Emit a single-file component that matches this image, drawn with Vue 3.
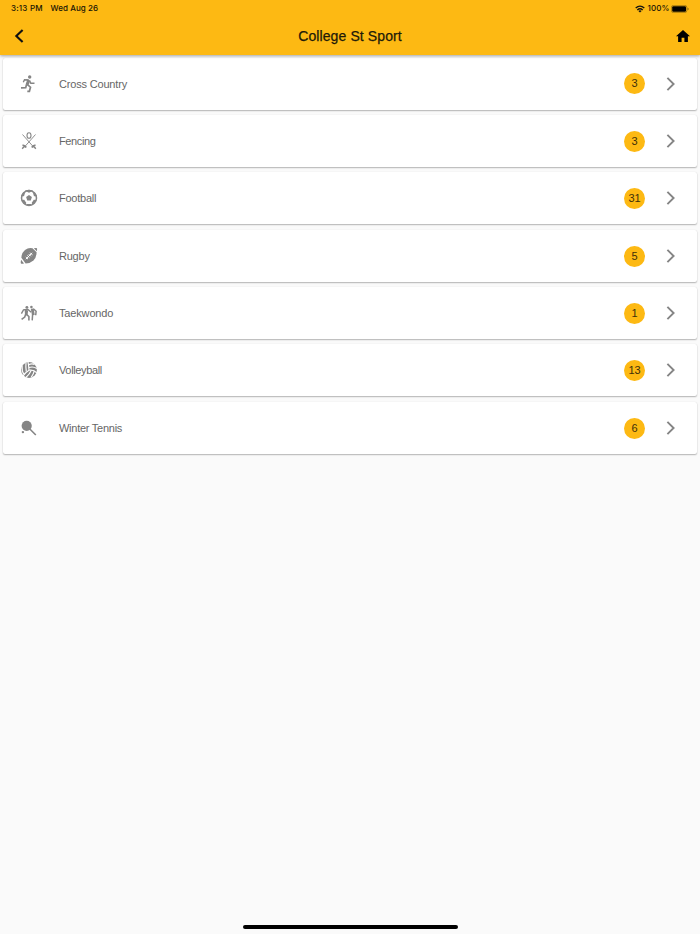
<script setup>
const sports = [
  { name: 'Cross Country', count: 3, icon: 'run', spacing: -0.18 },
  { name: 'Fencing', count: 3, icon: 'fencing', spacing: -0.36 },
  { name: 'Football', count: 31, icon: 'football', spacing: -0.25 },
  { name: 'Rugby', count: 5, icon: 'rugby', spacing: -0.22 },
  { name: 'Taekwondo', count: 1, icon: 'taekwondo', spacing: -0.16 },
  { name: 'Volleyball', count: 13, icon: 'volleyball', spacing: -0.36 },
  { name: 'Winter Tennis', count: 6, icon: 'tennis', spacing: -0.26 },
]
</script>

<template>
  <main class="screen">
    <header class="header">
      <div class="status">
        <span class="time">3:13 PM</span>
        <span class="date">Wed Aug 26</span>
        <svg class="wifi" viewBox="0 0 10 8">
          <g fill="none" stroke="#111" stroke-width="1.35">
            <path d="M.7 3.1Q5-.8 9.3 3.1" />
            <path d="M2.3 4.9Q5 2.5 7.7 4.9" />
          </g>
          <path d="M3.4 5.9Q5 4.7 6.6 5.9L5 7.6z" fill="#111" />
        </svg>
        <span class="percent">100%</span>
        <svg class="battery" viewBox="0 0 18 8">
          <rect x=".4" y=".4" width="15.4" height="7.2" rx="2" fill="none" stroke="#111" stroke-opacity=".45" stroke-width=".7" />
          <rect x="1.2" y="1.2" width="13.8" height="5.6" rx="1.2" fill="#000" />
          <path d="M16.6 2.8q1 .3 1 1.2t-1 1.2z" fill="#111" fill-opacity=".55" />
        </svg>
      </div>
      <div class="bar">
        <svg class="back" viewBox="0 0 10 14"><path d="M8.6.9 2.3 7l6.3 6.1" fill="none" stroke="#111" stroke-width="2.1" /></svg>
        <h1>College St Sport</h1>
        <svg class="home" viewBox="2 3 20 17"><path d="M10 20v-6h4v6h5v-8h3L12 3 2 12h3v8z" /></svg>
      </div>
    </header>

    <section class="list">
      <article v-for="sport in sports" :key="sport.name" class="card">
        <svg class="icon" viewBox="0 0 30 30">
          <g v-if="sport.icon === 'run'">
            <circle cx="15.7" cy="8" r="1.7" />
            <path d="M11.6 10.2 14.6 10.4 16.1 11.8 14.9 15.5 13 16.5 11.8 14.8 13 11.4z" />
            <path d="M9.3 13.2 10.5 10.7 14.5 11M15.6 11.6 16.8 14.2 20.5 14.3" fill="none" stroke="#858585" stroke-width="1.4" />
            <path d="M12.6 15.2 11.7 18.6 7 18.8" fill="none" stroke="#858585" stroke-width="1.7" />
            <path d="M13.1 15.4 16.5 18.2 15.4 22.3H13.3" fill="none" stroke="#858585" stroke-width="1.7" />
          </g>
          <g v-else-if="sport.icon === 'fencing'" fill="none" stroke="#858585">
            <ellipse cx="15" cy="9.5" rx="2" ry="2.8" stroke-width="1.1" />
            <path d="M8.5 8.5 20 21.5M21.5 8.5 10 21.5" stroke-width=".9" />
            <path d="M8.5 19.7Q10.3 18.7 12.2 21.5M21.5 19.7Q19.7 18.7 17.8 21.5" stroke-width="1.9" />
            <path d="m9.9 20.8-1.7 2M20.1 20.8l1.7 2" stroke-width="1.4" />
          </g>
          <g v-else-if="sport.icon === 'football'">
            <circle cx="15" cy="15" r="7.5" fill="none" stroke="#858585" stroke-width="1.5" />
            <path d="m15 12 2.9 2.1-1.1 3.4h-3.6l-1.1-3.4z" />
            <path d="m11 7.7 4 2.1 4-2.1-4-1zM7 13.1l3 .1 1.3-4.2-2.3.5zM23 13.1l-3 .1-1.3-4.2 2.3.5zM7.4 17l2.8-.3 2.2 3.2-1.3 2zM22.6 17l-2.8-.3-2.2 3.2 1.3 2zM12.9 20.9h4.2l.4 1.6h-5z" />
          </g>
          <g v-else-if="sport.icon === 'rugby'">
            <path d="M7.4 16.7Q7.5 11.9 11 9T18.5 7.2L22.6 11.3Q22.5 16.6 19.4 19.5T11.6 22.5z" />
            <path d="M19.8 7.2q3-.4 3.2.1t-.1 2.9zM7.1 18.7q-.7 3-.1 3.7t3 .1z" />
            <path d="m11.8 18.2 6.4-6.4M11.8 16l2.2 2.2M13.3 14.5l2.2 2.2M14.7 13.1l2.2 2.2M16.1 11.7l2.2 2.2" fill="none" stroke="#fff" stroke-width="1" />
          </g>
          <g v-else-if="sport.icon === 'taekwondo'">
            <circle cx="12.9" cy="9.3" r="1.4" />
            <circle cx="17.4" cy="9" r="1.3" />
            <path d="M7.4 15.7 9.5 11.9 13.7 11.3 17.2 14.3" fill="none" stroke="#858585" stroke-width="1.4" />
            <path d="m10.7 11.5 3.4 1-.5 4.2-2.6.9z" />
            <path d="M11.7 16.2 10.7 19.1 7.6 21.4M12.4 16.3 14.9 18.5V22.4" fill="none" stroke="#858585" stroke-width="1.6" />
            <path d="m16.8 10.8 2.8-.3 1.2 6.3-2.8.6z" />
            <path d="M19.3 10.8 22.1 13.2 21.7 17.2M18.6 16.8 18.2 22.4" fill="none" stroke="#858585" stroke-width="1.5" />
          </g>
          <g v-else-if="sport.icon === 'volleyball'">
            <circle cx="15" cy="15" r="7.9" />
            <g fill="none" stroke="#fff" stroke-width="1.15">
              <path d="M15 15.2Q14.7 10.5 14 6.9M15 15.2Q19.4 14.3 22.8 17.8M15 15.2Q11.1 17.5 8.9 21.3" />
              <path d="M12.3 16.6Q11.6 11.9 12 7.2M9.8 19.1Q7.8 16.3 8.1 10.9" />
              <path d="M14.9 12.5Q19.2 11.1 22.8 13.4M14.6 9.7Q18 8.2 20.5 9.5" />
              <path d="M17.4 15Q15.7 19.2 11.9 22.5M20.3 15.9Q19.4 19.4 17.3 22.2" />
            </g>
          </g>
          <g v-else>
            <circle cx="12.7" cy="12.8" r="5.1" />
            <path d="m15.8 16 6 6" stroke="#858585" stroke-width="1.6" />
            <circle cx="8.9" cy="19.1" r="1.2" />
          </g>
        </svg>
        <span class="label" :style="{ letterSpacing: sport.spacing + 'px' }">{{ sport.name }}</span>
        <span class="badge">{{ sport.count }}</span>
        <svg class="chevron" viewBox="0 0 10 14"><path d="M1.4.9 7.6 7l-6.2 6.1" fill="none" stroke="#858585" stroke-width="1.9" /></svg>
      </article>
    </section>
    <div class="indicator"></div>
  </main>
</template>

<style>
body {
  margin: 0;
  background: #fafafa;
}
</style>

<style scoped>
.screen {
  box-sizing: border-box;
  width: 700px;
  height: 934px;
  display: flex;
  flex-direction: column;
  overflow: hidden;
  background: #fafafa;
  font-family: "Liberation Sans", Arial, sans-serif;
}
.header {
  position: relative;
  z-index: 1;
  height: 55px;
  flex: none;
  background: #fdb913;
  box-shadow: 0 1px 3px rgba(0, 0, 0, .36);
}
.status {
  height: 17px;
  display: flex;
  align-items: center;
  padding: 0 11px;
  box-sizing: border-box;
  font: 500 8px/17px Inter, sans-serif;
  color: #171305;
}
.time { width: 39.5px; white-space: nowrap; letter-spacing: .2px; }
.date { white-space: nowrap; letter-spacing: .08px; }
.wifi { width: 10px; height: 8px; margin-left: auto; }
.percent { width: 22px; margin: 0 1.5px 0 2.5px; white-space: nowrap; letter-spacing: .1px; }
.battery { width: 18px; height: 8px; }
.bar {
  height: 38px;
  box-sizing: border-box;
  display: grid;
  grid-template-columns: 30px 1fr 30px;
  align-items: center;
  padding: 0 10px 0 13px;
}
.back { width: 10px; height: 14px; margin-left: 1px; }
.bar h1 {
  margin: 0;
  text-align: center;
  font-size: 14px;
  line-height: 20px;
  font-weight: 400;
  letter-spacing: .1px;
  color: #211a08;
  -webkit-text-stroke: .25px #211a08;
  padding-right: 3px;
}
.home { width: 14px; height: 12px; justify-self: end; fill: #000; }
.list {
  display: flex;
  flex-direction: column;
  gap: 5.4px;
  padding: 57.5px 3px 0;
  margin-top: -55px;
}
.card {
  height: 52px;
  box-sizing: border-box;
  display: flex;
  align-items: center;
  background: #fff;
  border-radius: 2px;
  box-shadow: 0 1px 1.5px rgba(0, 0, 0, .28), 0 0 1px rgba(0, 0, 0, .13);
  padding: 0 21px 0 11px;
}
.icon { width: 30px; height: 30px; fill: #858585; }
.label {
  flex: 1;
  margin-left: 15px;
  font-size: 11px;
  line-height: 16px;
  color: #666;
}
.badge {
  width: 21px;
  height: 21px;
  margin-top: .8px;
  border-radius: 50%;
  background: #fdb913;
  color: #40300a;
  font-size: 11px;
  line-height: 21px;
  text-align: center;
}
.chevron { width: 10px; height: 14px; margin-left: 21px; }
.indicator {
  width: 215px;
  height: 4px;
  border-radius: 2px;
  background: #000;
  margin: auto auto 5px;
}
</style>
